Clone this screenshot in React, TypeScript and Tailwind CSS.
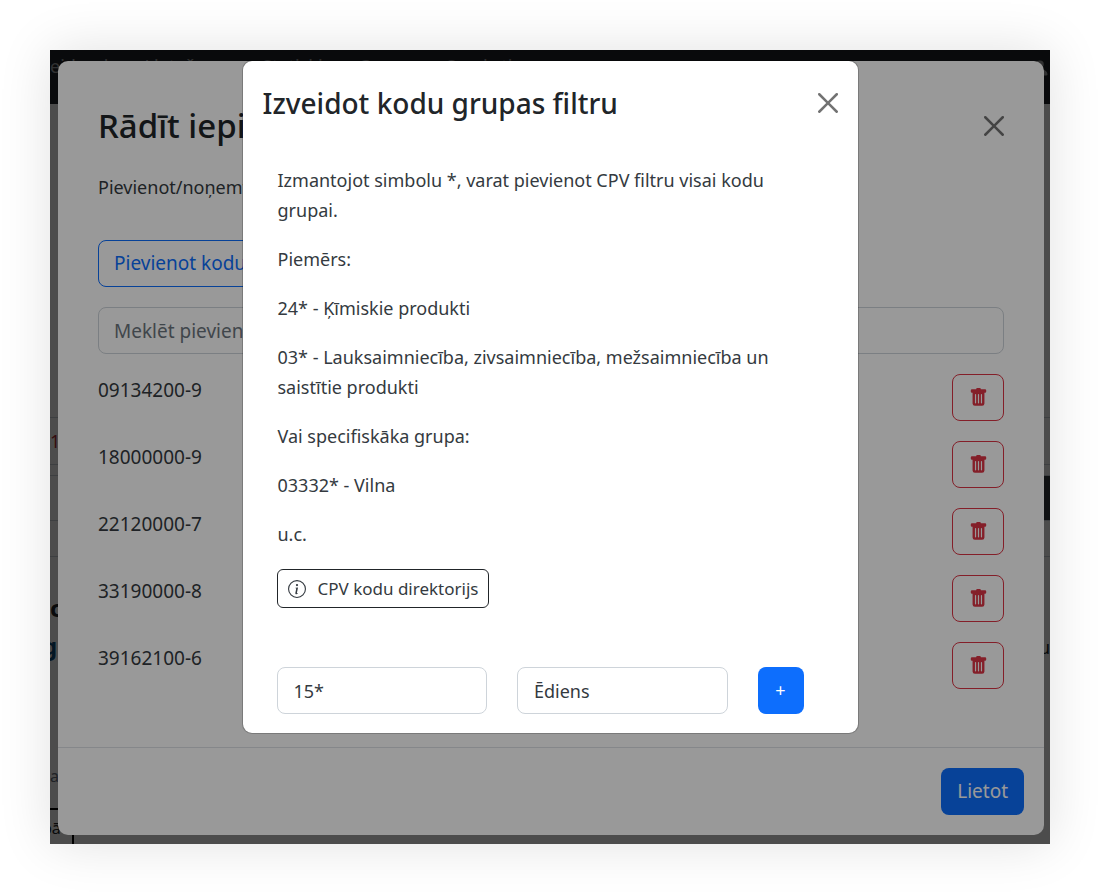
import type { ReactNode } from "react";
import { BsInfoCircle, BsPersonFill, BsTrashFill } from "react-icons/bs";

const codes = ["09134200-9", "18000000-9", "22120000-7", "33190000-8", "39162100-6"];

function CloseButton() {
  return (
    <button type="button" aria-label="Aizvērt" className="opacity-55">
      <svg viewBox="0 0 16 16" className="size-5" fill="#000">
        <path d="M.293.293a1 1 0 0 1 1.414 0L8 6.586 14.293.293a1 1 0 1 1 1.414 1.414L9.414 8l6.293 6.293a1 1 0 0 1-1.414 1.414L8 9.414l-6.293 6.293a1 1 0 0 1-1.414-1.414L6.586 8 .293 1.707a1 1 0 0 1 0-1.414z" />
      </svg>
    </button>
  );
}

function Layer({ children, className }: { children?: ReactNode; className?: string }) {
  return <div className={`col-start-1 row-start-1 min-w-0 ${className ?? ""}`}>{children}</div>;
}

function Page() {
  return (
    <Layer className="overflow-hidden bg-white text-[#212529]">
      <header className="flex h-[54px] items-start bg-[#212529] pt-1 leading-6 text-white/60">
        <nav className="flex flex-1 gap-9 whitespace-nowrap">
          <a href="#">eidumi</a>
          <a href="#">Lietošana</a>
          <a href="#">Statiski</a>
          <a href="#">Cenas</a>
          <a href="#">Saraksti</a>
        </nav>
        <BsPersonFill className="mt-1 size-5" />
      </header>
      <div className="mt-[313px] h-12 border-y border-[#ced4da] text-lg leading-[46px] text-[#b02a37]">1</div>
      <div className="mt-[10px] flex h-[46px] justify-end border-y border-[#ced4da]">
        <button type="button" aria-label="Meklēt" className="w-40 bg-[#343a40]" />
      </div>
      <div className="h-9 border-b border-[#ced4da]" />
      <div className="mt-8 text-2xl font-bold leading-[38px]">
        <p>c</p>
        <a href="#" className="-ml-2 block text-[#0b4a7a]">g</a>
      </div>
      <p className="-mt-9 text-right text-lg leading-9">u</p>
      <p className="mt-[99px] text-base leading-6 text-gray-500">a</p>
      <div className="mt-5 h-9 w-6 border-t-2 border-r-2 border-black text-base leading-9">
        <span className="-ml-2">pā</span>
      </div>
    </Layer>
  );
}

function CodesDialog() {
  return (
    <section className="rounded-[10px] bg-white text-[19px] text-[#212529]">
      <div className="px-10 pt-[43px] pb-[58px]">
        <div className="flex items-center justify-between">
          <h1 className="text-[33px] leading-[44px] font-medium">Rādīt iepirkumus</h1>
          <CloseButton />
        </div>
        <p className="mt-6 text-[18px] leading-[30px] text-[#343a40]">Pievienot/noņemt CPV kodus</p>
        <button
          type="button"
          className="mt-[38px] block h-[47px] rounded-lg border border-[#0d6efd] px-[15px] text-[#0d6efd]"
        >
          Pievienot kodu grupu
        </button>
        <input
          type="text"
          aria-label="Meklēt pievienotos kodus"
          placeholder="Meklēt pievienotos kodus"
          className="mt-5 block h-[47px] w-full rounded-lg border border-[#ced4da] px-[15px] placeholder:text-[#6c757d]"
        />
        <ul className="mt-5 flex flex-col gap-5">
          {codes.map((code) => (
            <li key={code} className="flex justify-between">
              <span className="leading-8 text-[#343a40]">{code}</span>
              <button
                type="button"
                aria-label={`Dzēst ${code}`}
                className="flex h-[47px] w-[52px] items-center justify-center rounded-lg border border-[#dc3545] text-[#dc3545]"
              >
                <BsTrashFill className="size-[19px]" />
              </button>
            </li>
          ))}
        </ul>
      </div>
      <footer className="flex justify-end border-t border-[#dee2e6] p-5">
        <button type="button" className="h-[47px] rounded-lg bg-[#0d6efd] px-4 text-white">
          Lietot
        </button>
      </footer>
    </section>
  );
}

function GroupDialog() {
  return (
    <section className="w-full max-w-[617px] rounded-[10px] border border-black/20 bg-white bg-clip-padding px-5 pb-[19px] text-[#343a40]">
      <div className="flex items-center justify-between pt-6">
        <h2 className="text-[28px] leading-9 font-medium text-[#212529]">Izveidot kodu grupas filtru</h2>
        <CloseButton />
      </div>
      <div className="mt-11 flex flex-col gap-[19px] px-[15px] leading-[30px]">
        <p>Izmantojot simbolu *, varat pievienot CPV filtru visai kodu grupai.</p>
        <p>Piemērs:</p>
        <p>24* - Ķīmiskie produkti</p>
        <p>03* - Lauksaimniecība, zivsaimniecība, mežsaimniecība un saistītie produkti</p>
        <p>Vai specifiskāka grupa:</p>
        <p>03332* - Vilna</p>
        <p>u.c.</p>
      </div>
      <a
        href="#"
        className="mt-5 ml-[14px] inline-flex h-[39px] items-center gap-3 rounded-md border border-[#212529] px-[10px] text-[17px]"
      >
        <BsInfoCircle className="size-[18px]" />
        CPV kodu direktorijs
      </a>
      <form className="mt-[59px] flex gap-[30px] pl-[14px] pr-[34px]">
        <input
          type="text"
          aria-label="Kods"
          defaultValue="15*"
          className="h-[47px] min-w-0 flex-1 rounded-lg border border-[#ced4da] px-4"
        />
        <input
          type="text"
          aria-label="Nosaukums"
          defaultValue="Ēdiens"
          className="h-[47px] min-w-0 flex-1 rounded-lg border border-[#ced4da] px-4"
        />
        <button type="button" aria-label="Pievienot" className="h-[47px] w-[46px] rounded-lg bg-[#0d6efd] text-white">
          +
        </button>
      </form>
    </section>
  );
}

export default function App() {
  return (
    <main className="p-[50px] font-['Noto_Sans','Open_Sans',sans-serif] text-[18px]">
      <div className="grid grid-cols-1 overflow-hidden shadow-[0_0_50px_rgba(0,0,0,0.12)]">
        <Page />
        <Layer className="bg-black/50 pt-[11px] pr-[6px] pb-[9px] pl-2">
          <CodesDialog />
        </Layer>
        <Layer className="z-10 flex items-start justify-center bg-black/40 pt-[10px]">
          <GroupDialog />
        </Layer>
      </div>
    </main>
  );
}
